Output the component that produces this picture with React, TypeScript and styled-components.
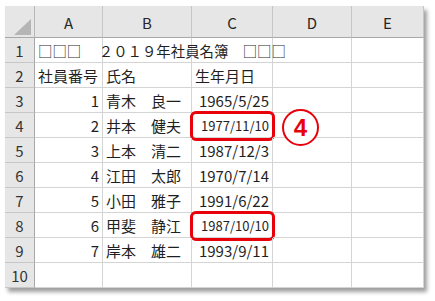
import React from 'react';
import styled, {createGlobalStyle} from 'styled-components';

const GlobalStyle = createGlobalStyle`
  html, body {
    margin: 0;
    padding: 0;
    background: #ffffff;
  }
  body {
    font-family: "Noto Sans CJK JP", "Noto Sans", sans-serif;
  }
`

type Row = {
    no: string
    name: string
    birth: string
    marked?: boolean
}

const rows: Array<Row> = [
    {no: '1', name: '青木　良一', birth: '1965/5/25'},
    {no: '2', name: '井本　健夫', birth: '1977/11/10', marked: true},
    {no: '3', name: '上本　清二', birth: '1987/12/3'},
    {no: '4', name: '江田　太郎', birth: '1970/7/14'},
    {no: '5', name: '小田　雅子', birth: '1991/6/22'},
    {no: '6', name: '甲斐　静江', birth: '1987/10/10', marked: true},
    {no: '7', name: '岸本　雄二', birth: '1993/9/11'},
]

const columns = ['A', 'B', 'C', 'D', 'E']

function App() {
    return (
        <Page>
            <GlobalStyle/>
            <Sheet>
                <Corner><CornerMark/></Corner>
                {columns.map(c => <ColHead key={c}>{c}</ColHead>)}

                <RowHead>1</RowHead>
                <Cell><TitleText>□□□　 ２０１９年社員名簿　□□□</TitleText></Cell>
                <Cell/><Cell/><Cell/><Cell/>

                <RowHead>2</RowHead>
                <Cell>社員番号</Cell>
                <Cell>氏名</Cell>
                <Cell>生年月日</Cell>
                <Cell/><Cell/>

                {rows.map((r, i) => (
                    <React.Fragment key={r.no}>
                        <RowHead>{i + 3}</RowHead>
                        <Cell $align="right">{r.no}</Cell>
                        <Cell>{r.name}</Cell>
                        <Cell $align="right" $small={r.marked}>
                            {r.birth}
                            {r.marked && <RedBox/>}
                        </Cell>
                        <Cell>
                            {r.no === '2' && <Badge>4</Badge>}
                        </Cell>
                        <Cell/>
                    </React.Fragment>
                ))}

                <RowHead>10</RowHead>
                <Cell/><Cell/><Cell/><Cell/><Cell/>
            </Sheet>
        </Page>
    );
}

export default App;


const Page = styled.div`
  width: 435px;
  height: 301px;
  padding: 6px 0 0 5px;
  box-sizing: border-box;
`

const Sheet = styled.div`
  display: grid;
  grid-template-columns: 30px 68px 89px 81px 79px 72px;
  grid-template-rows: 32px repeat(10, 25px);
  width: 419px;
  background: #ffffff;
  box-shadow: 3px 4px 4px rgba(0, 0, 0, 0.38);
`

const Corner = styled.div`
  position: relative;
  background: #e6e6e6;
  border-right: 1px solid #b8b8b8;
  border-bottom: 1px solid #a8a8a8;
  box-sizing: border-box;
`

const CornerMark = styled.div`
  position: absolute;
  right: 3px;
  bottom: 2px;
  width: 0;
  height: 0;
  border-left: 17px solid transparent;
  border-bottom: 16px solid #b5b5b5;
`

const ColHead = styled.div`
  display: flex;
  align-items: center;
  justify-content: center;
  background: #e6e6e6;
  border-right: 1px solid #c6c6c6;
  border-bottom: 1px solid #a8a8a8;
  box-sizing: border-box;
  font-size: 15px;
  color: #262626;
  padding-top: 2px;
`

const RowHead = styled.div`
  display: flex;
  align-items: center;
  justify-content: center;
  background: #e6e6e6;
  border-right: 1px solid #a8a8a8;
  border-bottom: 1px solid #c6c6c6;
  box-sizing: border-box;
  font-size: 15px;
  color: #333333;
`

const Cell = styled.div<{ $align?: 'left' | 'right', $small?: boolean }>`
  position: relative;
  display: flex;
  align-items: center;
  justify-content: ${p => p.$align === 'right' ? 'flex-end' : 'flex-start'};
  padding: 0 3px;
  border-right: 1px solid #d4d4d4;
  border-bottom: 1px solid #d4d4d4;
  box-sizing: border-box;
  font-size: ${p => p.$small ? '13px' : '15px'};
  color: #1f1f1f;
  white-space: nowrap;
`

const TitleText = styled.span`
  position: relative;
  z-index: 1;
  font-size: 14.4px;
`

const RedBox = styled.div`
  position: absolute;
  left: -2px;
  right: -3px;
  top: -2px;
  bottom: -4px;
  border: 3px solid #e8000b;
  border-radius: 6px;
  pointer-events: none;
`

const Badge = styled.div`
  position: absolute;
  left: 9px;
  top: -4px;
  width: 37px;
  height: 37px;
  box-sizing: border-box;
  border: 2.5px solid #e8000b;
  border-radius: 50%;
  display: flex;
  align-items: center;
  justify-content: center;
  color: #e8000b;
  font-family: "Liberation Sans", "Noto Sans", sans-serif;
  font-weight: bold;
  font-size: 24px;
  background: #ffffff;
  z-index: 2;
`
